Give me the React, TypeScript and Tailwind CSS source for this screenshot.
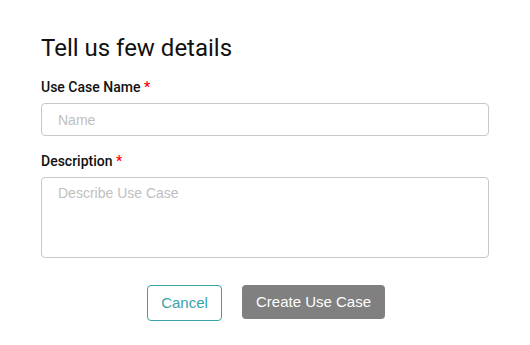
export default function App() {
  return (
    <div className="w-[530px] h-[345px] bg-white px-[41px] pt-[33px]" style={{ fontFamily: 'Roboto, sans-serif' }}>
      <h1 className="text-[24px] leading-[30px] text-[#111]">Tell us few details</h1>
      <label className="block mt-[14px] text-[14px] leading-[20px] font-medium text-[#111]">
        Use Case Name <span className="text-[#f00]">*</span>
      </label>
      <input
        placeholder="Name"
        className="mt-[6px] block w-[448px] h-[33px] rounded-[4px] border border-[#c8c8c8] px-[16px] text-[14px] placeholder:text-[#c0c0c0] outline-none"
        style={{ fontFamily: '"Liberation Sans", Arial, sans-serif' }}
      />
      <label className="block mt-[15px] text-[14px] leading-[20px] font-medium text-[#111]">
        Description <span className="text-[#f00]">*</span>
      </label>
      <textarea
        placeholder="Describe Use Case"
        className="mt-[6px] block w-[448px] h-[81px] resize-none rounded-[4px] border border-[#c8c8c8] px-[16px] pt-[5px] pb-[8px] text-[14px] placeholder:text-[#c0c0c0] outline-none"
        style={{ fontFamily: '"Liberation Sans", Arial, sans-serif' }}
      />
      <div className="mt-[27px] flex justify-center gap-[20px] pl-[2px]" style={{ fontFamily: '"Liberation Sans", Arial, sans-serif' }}>
        <button className="w-[75px] h-[36px] rounded-[4px] border border-[#3aa3a8] text-[#3aa3a8] text-[15px] bg-white">
          Cancel
        </button>
        <button className="w-[143px] h-[34px] rounded-[4px] bg-[#808080] text-white text-[15px]">
          Create Use Case
        </button>
      </div>
    </div>
  )
}
